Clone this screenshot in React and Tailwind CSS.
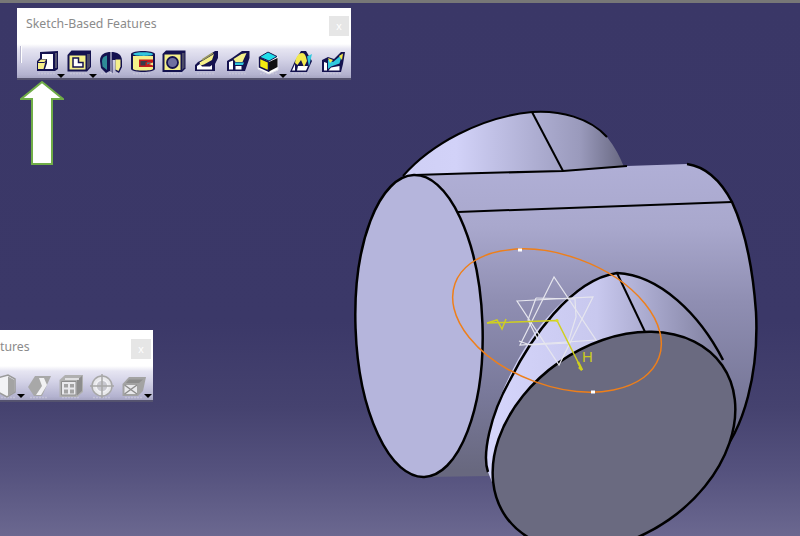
const navy = "#14124f";

function Drop({ low }) {
  return <span className={`absolute right-[-2px] w-0 h-0 border-l-[4px] border-r-[4px] border-t-[4px] border-l-transparent border-r-transparent border-t-black ${low ? "bottom-0" : "bottom-[-4px]"}`} />;
}

function Shadow() {
  return <path d="M3 23.500h18" stroke="#c3c2d6" strokeWidth="1.500" strokeDasharray="2 1" fill="none" />;
}

const icons = {
  pad: (
    <>
      <path d="M5 2L23 1V19L20 21H2V11L5 8Z" fill={navy} />
      <path d="M7 4H18V19H10L12 13V9H7Z" fill="#fff" />
      <path d="M20 3h2v15h-2z" fill="#55546f" />
      <path d="M3 12L6 9.500H11.500L10.500 11.500L8.500 19H3Z" fill="#f7f08a" />
      <path d="M3 12.500H9.500L11.500 10" stroke={navy} strokeWidth="1" fill="none" />
    </>
  ),
  pocket: (
    <>
      <path d="M0.500 5L4.500 0.500H24V17L20 21.500H0.500Z" fill={navy} />
      <path d="M2.500 5.500H18.500V19.500H2.500Z" fill="#f5f08a" />
      <path d="M6 8H11.500V12.500H16V17H6Z" fill="#fff" stroke={navy} strokeWidth="1.500" />
      <path d="M20 4H23V16.500L20 19.500Z" fill="#4c4b66" />
    </>
  ),
  shaft: (
    <>
      <path d="M2 11C2 4 7 2 13 2S24 4 24 11V17L21 23L17.500 21V10H14.500V23L11.500 21L8 23L3 18Z" fill={navy} />
      <path d="M4 11C4 8 6 6 9 5.500V20L4.500 16.500Z" fill="#2e8a96" />
      <path d="M17.500 9.500H22.500V16.500L20.500 21L17.500 19.500Z" fill="#f5f08a" />
      <path d="M13 0V23" stroke="#f2f2fa" strokeWidth="1" />
    </>
  ),
  groove: (
    <>
      <path d="M1 4C2 0 24 0 25 4V19C24 23 2 23 1 19Z" fill={navy} />
      <path d="M3 6H23V19C22 21 4 21 3 19Z" fill="#f5f08a" />
      <path d="M3 4C4 1.500 22 1.500 23 4S4 6.500 3 4Z" fill="#32c6dc" />
      <path d="M9 9.500H23V12.500L19 14L23 15.500V17H9Z" fill="#c41a1a" />
      <path d="M10.500 11H18L15.500 12.500V15.500H10.500Z" fill="#3a3a4a" />
      <path d="M17 12.500H22L17 14.500Z" fill="#2e8a96" />
    </>
  ),
  hole: (
    <>
      <path d="M0.500 4L4 0.500H23.500V18.500L20 22H0.500Z" fill={navy} />
      <path d="M2.500 4.500H18.500V20H2.500Z" fill="#f5f08a" />
      <circle cx="10.500" cy="12.500" r="5.500" fill="#6f6fa0" stroke={navy} strokeWidth="1.800" />
      <path d="M20 3H22.500V17.500L20 20Z" fill="#4c4b66" />
    </>
  ),
  rib: (
    <>
      <path d="M1 21V15L4 12L8 10L21 1H24V8L21 14V21Z" fill={navy} />
      <path d="M3 19.500V16L6 14L8 16.500H16L18 15V19.500Z" fill="#fff" />
      <path d="M5.500 12.500L10 10L20 4L18 10L10 14.500L6.500 15.500Z" fill="#f5f08a" />
      <path d="M8 10L19 3" stroke="#9a9860" strokeWidth="1.500" fill="none" />
    </>
  ),
  slot: (
    <>
      <path d="M1 21V11L6 8L16 1H23.500V8L19 21Z" fill={navy} />
      <path d="M3 19.500V12L7 10.500V19.500ZM9.500 19.500V16H15.500V19.500Z" fill="#fff" />
      <path d="M7.500 9L15.500 4L20.500 3L16.500 12H9.500Z" fill="#f5f08a" />
      <path d="M9 12.500H18L17 15H9Z" fill="#32c6dc" />
    </>
  ),
  solid: (
    <>
      <path d="M1 7L11 0.500L21 6V20L12 24L1 19Z" fill="#fff" stroke="#dedeea" />
      <path d="M2.500 7L11 2L20 6.500L12 11Z" fill="#20dce8" stroke={navy} strokeWidth="1" />
      <path d="M2.500 8L11.500 12V21L2.500 17Z" fill="#f4ea10" stroke={navy} strokeWidth="1.500" />
      <path d="M12 12L20.500 8V17L12 21.500Z" fill="#111" />
    </>
  ),
  loft: (
    <>
      <path d="M1 22L6 11L12 1H17L23 11L18 22Z" fill={navy} />
      <path d="M3 20.500L6 14V20.500ZM8 20.500H17L19 16H9Z" fill="#fff" />
      <path d="M6 13C7 6 10 3 13 3S17 6 18 11L15 17L12 10L8.500 15Z" fill="#f3e94e" />
      <path d="M18 6.500L23 4L20 16.500Z" fill="#31c9de" />
    </>
  ),
  removedLoft: (
    <>
      <path d="M1 22V10L7 7L13 9L20 2H24L22 14L20 22Z" fill={navy} />
      <path d="M3 20.500V12L6 13V20.500ZM7.500 20.500L10 17.500L18.500 16V20.500Z" fill="#fff" />
      <path d="M7 9.500L12 12L18 7L21 4.500L18.500 13.500L10 16.500L7 19Z" fill="#31c9de" />
      <path d="M18 6L22 3.500L21 10Z" fill="#f3e94e" />
      <path d="M7 8L12 10L9 13Z" fill="#f3e94e" />
    </>
  ),
  grayHex: (
    <>
      <path d="M2 4L13 1L20 5V18L12 23L3 18Z" fill="#f2f2f5" stroke="#9a9a9a" strokeWidth="1.500" />
      <path d="M13 2.500L19.500 6V18L13 22Z" fill="#a3a3a3" />
    </>
  ),
  grayChevron: (
    <>
      <path d="M1 13L8 2H24L15 22H7Z" fill="#a8a8a8" />
      <path d="M9 21L15 12L12 4H17L20 11L14 21Z" fill="#f1f1f3" />
    </>
  ),
  grayCube: (
    <>
      <path d="M0.500 6L6 1H24V18L18 23H0.500Z" fill="#b0b0b0" />
      <path d="M2.500 7.500H17V21H2.500Z" fill="#e9e9ec" stroke="#8d8d8d" />
      <path d="M5 10H9V13.500H5ZM11 10H15V13.500H11ZM5 15.500H9V19.500H5ZM11 15.500H15V19.500H11Z" fill="#a3a3a3" />
      <path d="M18 6L23 2V17L18 21.500Z" fill="#8d8d8d" />
      <path d="M6 5H20" stroke="#f1f1f3" strokeWidth="1.500" />
    </>
  ),
  grayTarget: (
    <>
      <circle cx="12" cy="12" r="10" fill="#e9e9ec" stroke="#a8a8a8" strokeWidth="1.500" />
      <circle cx="12" cy="12" r="6" fill="#c8c8cf" stroke="#f2f2f5" strokeWidth="1.500" />
      <path d="M12 0V24M0 12H24" stroke="#a8a8a8" strokeWidth="1.500" />
    </>
  ),
  grayBox: (
    <>
      <path d="M0.500 10L7 3H24L21 17L16 22H0.500Z" fill="#a3a3a3" />
      <path d="M2.500 11H15V20H2.500Z" fill="#e9e9ec" />
      <path d="M2.500 11L15 20M15 11L2.500 20" stroke="#8d8d8d" strokeWidth="1.500" />
      <path d="M7 5.500H21L17 9H4Z" fill="#8d8d8d" />
    </>
  ),
};

function Tool({ name, drop, low }) {
  return (
    <div className="relative h-6 w-[31.800px] shrink-0 flex justify-center">
      <svg viewBox="0 0 24 24" className="w-6 h-6 block overflow-visible">
        <Shadow />
        {icons[name]}
      </svg>
      {drop && <Drop low={low} />}
    </div>
  );
}

function TitleBar({ children, className }) {
  return (
    <div className={`flex items-start justify-between h-[36px] bg-white ${className}`}>
      <span className="text-[12.300px] leading-[16px] text-[#8b8b8b] font-['Noto_Sans',sans-serif] whitespace-nowrap">{children}</span>
      <span className="mr-[2px] w-5 h-5 bg-[#e6e6e6] text-white text-[11px] leading-[20px] text-center font-['Liberation_Sans',sans-serif]">x</span>
    </div>
  );
}

function Viewport() {
  return (
    <svg viewBox="0 0 800 536" className="absolute inset-0 w-full h-full">
      <defs>
        <linearGradient id="stubTop" gradientUnits="userSpaceOnUse" x1="400" y1="0" x2="625" y2="0">
          <stop offset="0" stopColor="#cfcff5" />
          <stop offset="0.25" stopColor="#d2d2f8" />
          <stop offset="0.6" stopColor="#aeaed2" />
          <stop offset="0.8" stopColor="#9a9abc" />
          <stop offset="1" stopColor="#66667f" />
        </linearGradient>
        <linearGradient id="body" gradientUnits="userSpaceOnUse" x1="0" y1="165" x2="0" y2="470">
          <stop offset="0" stopColor="#b0afd6" />
          <stop offset="0.2" stopColor="#a9a8cd" />
          <stop offset="0.45" stopColor="#8f8eb2" />
          <stop offset="0.75" stopColor="#79799a" />
          <stop offset="1" stopColor="#68687f" />
        </linearGradient>
        <linearGradient id="stubLow" gradientUnits="userSpaceOnUse" x1="490" y1="0" x2="728" y2="0">
          <stop offset="0" stopColor="#d5d5fb" />
          <stop offset="0.45" stopColor="#c8c8ee" />
          <stop offset="0.72" stopColor="#a2a2c6" />
          <stop offset="1" stopColor="#7a7a98" />
        </linearGradient>
      </defs>

      <path d="M403,176 C430,145 480,117 532,112 C560,110 590,118 607,137 C615,147 620,157 624,167 L563,172 L463,174 Z" fill="url(#stubTop)" />
      <path d="M403,176 C430,145 480,117 532,112 C560,110 590,118 607,137" fill="none" stroke="#000" strokeWidth="2" />
      <path d="M532,112 L563,171" stroke="#000" strokeWidth="2" />

      <path d="M415,175 L463,173.500 L563,171 Q590,169 627,166 L687,164 C708,167 723,185 732,202 C745,230 753,270 756,312 C759,370 745,430 716,460 L490,476 L425,477 Z" fill="url(#body)" />
      <path d="M415,175 L463,173.500 L563,171 Q590,169 627,166" fill="none" stroke="#000" strokeWidth="2" />
      <path d="M687,164 C708,167 723,185 732,202 C745,230 753,270 756,312 C759,370 745,430 716,460" fill="none" stroke="#000" strokeWidth="2.500" />
      <path d="M458,212 L732,202" stroke="#000" strokeWidth="2" />

      <ellipse cx="419" cy="326" rx="63.500" ry="151" transform="rotate(-2 419 326)" fill="#b5b5dc" stroke="#000" strokeWidth="2.500" />

      <path d="M485,455 C489,415 510,370 530,340 C550,310 585,275 617,273 C660,275 700,315 723,362 C735,385 737,400 737,410 C735,430 730,450 717,460 L613,500 L495,490 L488,472 Z" fill="url(#stubLow)" />
      <path d="M488,472 C482,455 490,415 510,380 C530,340 570,280 617,273 C660,275 700,315 723,360" fill="none" stroke="#000" strokeWidth="2.500" />
      <path d="M617,273 L646,334" stroke="#000" strokeWidth="2" />

      <ellipse cx="614" cy="441" rx="132" ry="96" transform="rotate(-35 614 441)" fill="#6a6a80" stroke="#000" strokeWidth="2.500" />

      <ellipse cx="557" cy="320.500" rx="108.500" ry="65" transform="rotate(20 557 320.500)" fill="none" stroke="#ee7f1a" strokeWidth="1.500" />
      <rect x="518" y="248.500" width="4" height="3" fill="#fff" />
      <rect x="591" y="390.500" width="4" height="3" fill="#fff" />

      <g fill="none" stroke="#e6e6ee" strokeWidth="1.200">
        <path d="M554,277 L520,345 L596,340 Z" />
        <path d="M517,301 L593,297 L559,365 Z" />
        <path d="M536,298 L575,299 L576,317 L568,343 L530,345 L519,341" />
        <path d="M536,298 L528,320 L538,340" />
      </g>

      <g fill="none" stroke="#cfcf20" strokeWidth="1.500">
        <path d="M487,323 L557,320.500 L582,370" />
        <path d="M487,323 L497,320 L502,329 L506,319" />
        <path d="M578,362 L582,370 L579,367" strokeWidth="2.500" />
      </g>
      <circle cx="557" cy="320.500" r="1.500" fill="#dcdc20" />
      <text x="582" y="362" fontSize="15" fill="#c9c920" fontFamily="'Liberation Sans', sans-serif">H</text>
    </svg>
  );
}

export default function App() {
  return (
    <div className="relative w-[800px] h-[536px] overflow-hidden bg-[linear-gradient(180deg,#3a3767_0%,#3b3868_60%,#45426f_76%,#55527e_88%,#6b6890_100%)]">
      <div className="h-[3px] bg-[#777] relative" />
      <Viewport />

      <div className="absolute left-[17px] top-[8px] w-[334px] h-[72px] flex flex-col border-b-2 border-[#55536f] bg-white">
        <TitleBar className="pl-[9px] pt-[8px]">Sketch-Based Features</TitleBar>
        <div className="flex-1 flex items-start pt-[6px] pl-[3px] bg-[linear-gradient(180deg,#ffffff_0%,#e6e5f2_15%,#d4d3e7_45%,#b3b2cf_90%,#a6a5c2_100%)]">
          <div className="w-[2px] h-[17px] mt-[-4px] mr-[9px] bg-[#fff] border-l border-[#b9b8cf]" />
          <div className="flex items-start">
            <Tool name="pad" drop />
            <Tool name="pocket" drop />
            <Tool name="shaft" />
            <Tool name="groove" />
            <Tool name="hole" />
            <Tool name="rib" />
            <Tool name="slot" />
            <Tool name="solid" drop />
            <Tool name="loft" />
            <Tool name="removedLoft" />
          </div>
        </div>
      </div>

      <div className="absolute left-0 top-[330px] w-[153px] h-[72px] flex flex-col border-b-2 border-[#55536f] bg-white">
        <TitleBar className="pt-[9px]">tures</TitleBar>
        <div className="flex-1 flex items-start justify-end pt-[8px] pr-[3px] bg-[linear-gradient(180deg,#ffffff_0%,#e6e5f2_15%,#d4d3e7_45%,#b3b2cf_90%,#a6a5c2_100%)]">
          <div className="flex items-start">
            <Tool name="grayHex" drop low />
            <Tool name="grayChevron" />
            <Tool name="grayCube" />
            <Tool name="grayTarget" />
            <Tool name="grayBox" drop low />
          </div>
        </div>
      </div>

      <svg viewBox="0 0 44 84" className="absolute left-[20px] top-[81px] w-[44px] h-[84px]">
        <path d="M22 1 L43 18 L32 18 L32 83 L12 83 L12 18 L1 18 Z" fill="#fff" stroke="#70ad47" strokeWidth="2" />
      </svg>
    </div>
  );
}
